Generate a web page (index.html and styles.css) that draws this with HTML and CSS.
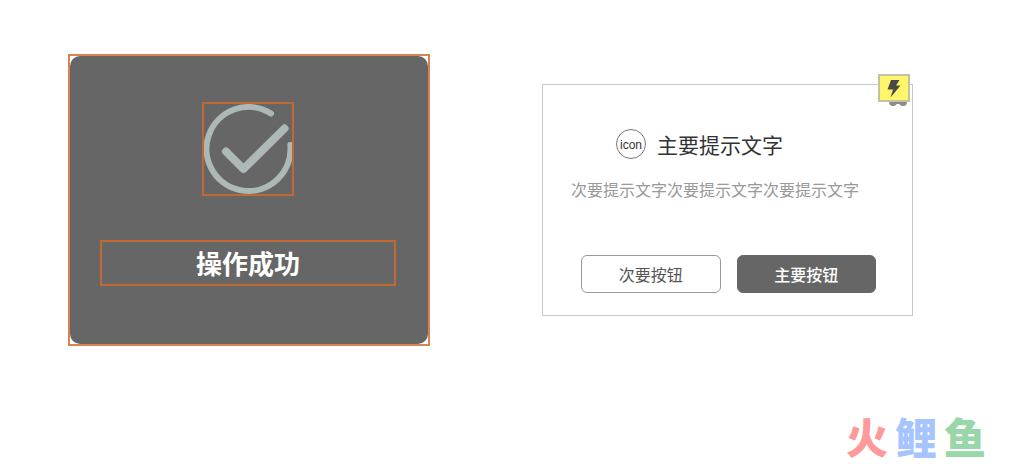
FILE: index.html
```html
<!DOCTYPE html>
<html lang="zh-CN">
<head>
    <meta charset="UTF-8">
    <meta name="viewport" content="width=device-width, initial-scale=1.0">
    <title>提示框</title>
    <link rel="stylesheet" href="styles.css">
</head>
<body>
<main class="board">
    <!-- Toast with its layout guides -->
    <section class="toast-frame">
        <div class="toast">
            <div class="toast-icon">
                <svg width="88" height="90" viewBox="0 0 88 90" fill="none" stroke="#acb9b7" stroke-linecap="round" stroke-linejoin="round">
                    <path d="M67 9.500A42 42 0 1 0 86.300 41" stroke-width="6"/>
                    <path d="M22 47.500 39.500 65 80.500 24.500" stroke-width="8"/>
                </svg>
            </div>
            <p class="toast-text">操作成功</p>
        </div>
    </section>

    <!-- Dialog with two actions -->
    <section class="dialog">
        <div class="badge">
            <svg width="32" height="33" viewBox="0 0 32 33">
                <circle cx="15" cy="28" r="4" fill="#8c8c8c"/>
                <circle cx="25" cy="28" r="4" fill="#8c8c8c"/>
                <path d="M15 27h10v3H15z" fill="#8c8c8c"/>
                <rect x="1" y="1" width="30" height="26" fill="#fdf66a" stroke="#c3c3a4" stroke-width="2"/>
                <path d="M13 6H21.500L18 11.500H22.500L12.500 23.500L15 15.500H9.500z" fill="#4a4a42"/>
            </svg>
        </div>
        <div class="dialog-head">
            <span class="dialog-icon">icon</span>
            <h1 class="dialog-title">主要提示文字</h1>
        </div>
        <p class="dialog-text">次要提示文字次要提示文字次要提示文字</p>
        <div class="dialog-actions">
            <button type="button" class="btn">次要按钮</button>
            <button type="button" class="btn btn-primary">主要按钮</button>
        </div>
    </section>
</main>

<footer class="brand">
    <span class="brand-red">火</span>
    <span class="brand-blue">鲤</span>
    <span class="brand-green">鱼</span>
</footer>
</body>
</html>
```
FILE: styles.css
```css
* {
    box-sizing: border-box;
}

body {
    margin: 0;
    background-color: #fff;
    font-family: "Noto Sans CJK SC", sans-serif;
    font-size: 16px;
}

h1,
p {
    margin: 0;
    font-weight: normal;
}

.board {
    display: grid;
    grid-template-columns: 362fr 371fr;
    align-items: start;
    gap: 112px;
    padding: 54px 97px 0 68px;
}

/* Toast */
.toast-frame {
    border: 2px solid #d9834f;
}

.toast {
    display: flex;
    flex-direction: column;
    align-items: center;
    gap: 44px;
    padding: 46px 32px 58px 30px;
    border-radius: 10px;
    background-color: #666;
}

.toast-icon {
    display: flex;
    border: 2px solid #c06a32;
}

.toast-text {
    width: 100%;
    border: 2px solid #c06a32;
    color: #fff;
    font-size: 26px;
    font-weight: bold;
    line-height: 42px;
    text-align: center;
}

/* Dialog */
.dialog {
    position: relative;
    margin-top: 30px;
    padding: 44px 26px 22px 28px;
    border: 1px solid #c8c8c8;
}

.badge {
    position: absolute;
    top: -11px;
    right: 2px;
    display: flex;
}

.dialog-head {
    display: flex;
    align-items: center;
    justify-content: center;
    gap: 11px;
    padding-right: 58px;
}

.dialog-icon {
    width: 30px;
    height: 30px;
    border: 1px solid #777;
    border-radius: 50%;
    color: #333;
    font-family: "Liberation Sans", Arial, sans-serif;
    font-size: 12px;
    line-height: 30px;
    text-align: center;
}

.dialog-title {
    color: #333;
    font-size: 21px;
    line-height: 28px;
}

.dialog-text {
    margin: 18px 0 54px;
    color: #999;
    line-height: 24px;
}

.dialog-actions {
    display: flex;
    gap: 16px;
    padding: 0 10px;
}

.btn {
    flex: 1;
    height: 38px;
    padding: 0;
    border: 1px solid #999;
    border-radius: 6px;
    background-color: #fff;
    color: #555;
    font-family: inherit;
    font-size: 16px;
    cursor: pointer;
}

.btn-primary {
    border-color: #666;
    background-color: #666;
    color: #fff;
    font-weight: 500;
}

/* Brand mark in the corner */
.brand {
    display: flex;
    justify-content: flex-end;
    gap: 7px;
    padding: 70px 24px 0 0;
    font-family: "Liberation Sans", "Noto Sans CJK SC", sans-serif;
    font-size: 42px;
    font-weight: 900;
    line-height: 48px;
}

.brand-red {
    color: #ff9a9a;
}

.brand-blue {
    color: #a6c4ff;
}

.brand-green {
    color: #99d6aa;
}
```
